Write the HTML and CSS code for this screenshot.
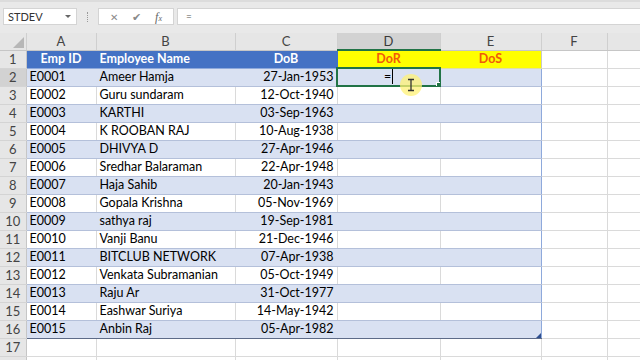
FILE: index.html
```html
<!DOCTYPE html>
<html lang="en">
<head>
    <meta charset="UTF-8">
    <title>Employee Sheet</title>
    <link rel="stylesheet" href="styles.css">
</head>
<body>
    <div class="formula-bar">
        <div class="name-box">
            <span>STDEV</span>
            <span class="arrow"></span>
        </div>
        <div class="grip"></div>
        <div class="fx-buttons">
            <span class="fx-btn cancel">&#x2715;</span>
            <span class="fx-btn enter">&#x2714;</span>
            <span class="fx-btn fx"><i>f</i><small>x</small></span>
        </div>
        <div class="fx-input">=</div>
    </div>

    <table class="sheet">
        <colgroup>
            <col class="c-rh"><col class="c-a"><col class="c-b"><col class="c-c">
            <col class="c-d"><col class="c-e"><col class="c-f"><col class="c-g">
        </colgroup>
        <thead>
            <tr>
                <th class="corner"><span class="tri"></span></th>
                <th>A</th><th>B</th><th>C</th><th class="active">D</th><th>E</th><th>F</th><th></th>
            </tr>
        </thead>
        <tbody id="rows">
            <tr class="head">
                <th class="rh">1</th>
                <td class="blue">Emp ID</td>
                <td class="blue left">Employee Name</td>
                <td class="blue">DoB</td>
                <td class="yellow">DoR</td>
                <td class="yellow last">DoS</td>
                <td></td><td></td>
            </tr>
        </tbody>
    </table>

    <div class="cursor">
        <svg width="24" height="24" viewBox="0 0 24 24">
            <circle cx="12" cy="12" r="11" fill="#fff176" fill-opacity="0.75"/>
            <path d="M9 6.5h6M9 17.5h6M12 6.5v11" stroke="#333" stroke-width="1.3" fill="none"/>
        </svg>
    </div>

    <script>
        // employee data
        const employees = [
            ['E0001', 'Ameer Hamja', '27-Jan-1953'],
            ['E0002', 'Guru sundaram', '12-Oct-1940'],
            ['E0003', 'KARTHI', '03-Sep-1963'],
            ['E0004', 'K ROOBAN RAJ', '10-Aug-1938'],
            ['E0005', 'DHIVYA D', '27-Apr-1946'],
            ['E0006', 'Sredhar Balaraman', '22-Apr-1948'],
            ['E0007', 'Haja Sahib', '20-Jan-1943'],
            ['E0008', 'Gopala Krishna', '05-Nov-1969'],
            ['E0009', 'sathya raj', '19-Sep-1981'],
            ['E0010', 'Vanji Banu', '21-Dec-1946'],
            ['E0011', 'BITCLUB NETWORK', '07-Apr-1938'],
            ['E0012', 'Venkata Subramanian', '05-Oct-1949'],
            ['E0013', 'Raju Ar', '31-Oct-1977'],
            ['E0014', 'Eashwar Suriya', '14-May-1942'],
            ['E0015', 'Anbin Raj', '05-Apr-1982']
        ];

        const body = document.getElementById('rows');
        let html = '';
        employees.forEach((emp, i) => {
            const rowNum = i + 2;
            const band = i % 2 === 0 ? 'band' : 'plain';
            const lastRow = i === employees.length - 1 ? ' bottom' : '';
            html += `<tr class="${band}${lastRow}">
                <th class="rh${rowNum === 2 ? ' active' : ''}">${rowNum}</th>
                <td class="t">${emp[0]}</td>
                <td class="t">${emp[1]}</td>
                <td class="t num">${emp[2]}</td>
                <td class="t${rowNum === 2 ? ' sel' : ''}">${rowNum === 2 ? '<span class="edit">=</span>' : ''}</td>
                <td class="t last">${i === employees.length - 1 ? '<span class="handle"></span>' : ''}</td>
                <td></td><td></td>
            </tr>`;
        });
        for (let r = 17; r <= 18; r++) {
            html += `<tr><th class="rh">${r}</th><td></td><td></td><td></td><td></td><td></td><td></td><td></td></tr>`;
        }
        body.insertAdjacentHTML('beforeend', html);
    </script>
</body>
</html>
```

FILE: styles.css
```css
/* sheet styles */
body {
    margin: 0;
    width: 640px;
    height: 360px;
    overflow: hidden;
    background: #ffffff;
    font-family: 'Lato', 'Open Sans', sans-serif;
    color: #000;
    position: relative;
}

.formula-bar {
    height: 33px;
    background: #e9e9e9;
    border-top: 2px solid #dcdcdc;
    box-sizing: border-box;
    display: flex;
    align-items: center;
    padding: 0 0 2px 3px;
}

.name-box {
    width: 74px;
    height: 17px;
    background: #fff;
    border: 1px solid #d4d4d4;
    box-sizing: border-box;
    display: flex;
    align-items: center;
    justify-content: space-between;
    padding: 0 5px 0 4px;
    font-size: 11px;
    color: #333;
}

.arrow {
    width: 0;
    height: 0;
    border-left: 3px solid transparent;
    border-right: 3px solid transparent;
    border-top: 3px solid #666;
}

.grip {
    width: 1px;
    height: 10px;
    margin: 0 9px 0 10px;
    border-left: 1px dotted #999;
}

.fx-buttons {
    width: 76px;
    height: 17px;
    background: #fff;
    border: 1px solid #d4d4d4;
    box-sizing: border-box;
    display: flex;
    align-items: center;
    justify-content: space-around;
    padding: 0 4px;
}

.fx-btn {
    font-size: 11px;
    color: #8a8a8a;
    line-height: 1;
}

.fx-btn.cancel {
    font-size: 10px;
}

.fx-btn.fx {
    font-family: 'Liberation Serif', serif;
    font-size: 12px;
    color: #666;
}

.fx-btn.fx small {
    font-size: 8px;
    font-style: italic;
}

.fx-input {
    flex: 1;
    height: 17px;
    margin-left: 3px;
    background: #fff;
    border: 1px solid #d4d4d4;
    border-right: none;
    box-sizing: border-box;
    font-size: 10px;
    line-height: 15px;
    padding-left: 8px;
    color: #555;
}

.sheet {
    width: 640px;
    table-layout: fixed;
    border-collapse: collapse;
    font-size: 12.5px;
}

.c-rh { width: 26px; }
.c-a { width: 70px; }
.c-b { width: 139px; }
.c-c { width: 102px; }
.c-d { width: 103px; }
.c-e { width: 101px; }
.c-f { width: 66px; }
.c-g { width: 33px; }

thead th {
    height: 16px;
    padding: 0;
    background: #e6e6e6;
    border-right: 1px solid #cfcfcf;
    border-bottom: 1px solid #c6c6c6;
    font-weight: normal;
    font-size: 13px;
    color: #444;
    line-height: 15px;
}

thead th.active {
    background: #d2d2d2;
    border-bottom: 2px solid #217346;
    color: #3a3a3a;
}

.corner {
    position: relative;
}

.tri {
    position: absolute;
    right: 2px;
    bottom: 2px;
    width: 0;
    height: 0;
    border-left: 11px solid transparent;
    border-bottom: 11px solid #b7b7b7;
}

tbody tr {
    height: 18px;
}

tbody th.rh {
    padding: 0;
    background: #e6e6e6;
    border-right: 1px solid #c6c6c6;
    border-bottom: 1px solid #d4d4d4;
    font-weight: normal;
    color: #444;
    font-size: 13px;
}

tbody th.rh.active {
    background: #d2d2d2;
}

td {
    padding: 0 3px;
    border-right: 1px solid #dadada;
    border-bottom: 1px solid #dadada;
    white-space: nowrap;
    overflow: hidden;
    line-height: 16px;
}

.head td.blue {
    background: #4472c4;
    color: #fff;
    font-weight: bold;
    text-align: center;
    border-right-color: #4472c4;
    border-bottom-color: #8ea9db;
}

.head td.left {
    text-align: left;
}

.head td.yellow {
    background: #ffff00;
    color: #f05a0a;
    font-weight: bold;
    text-align: center;
    border-right-color: #ffff00;
    border-bottom-color: #e0e0a0;
}

.head td.last {
    border-right: 1px solid #c8c8c8;
}

.band td.t {
    background: #d9e1f2;
    border-right-color: #d9e1f2;
    border-bottom-color: #b4c0da;
}

.plain td.t {
    border-bottom-color: #b4c0da;
}

td.t.last {
    border-right: 1px solid #8ea9db;
}

.bottom td.t {
    border-bottom: 1px solid #5d6b88;
}

td.num {
    text-align: right;
}

td.sel {
    position: relative;
    outline: 2px solid #217346;
    outline-offset: -1px;
    text-align: center;
}

td.sel::after {
    content: '';
    position: absolute;
    right: -3px;
    bottom: -3px;
    width: 5px;
    height: 5px;
    background: #217346;
    border: 1px solid #fff;
}

.edit {
    border-right: 1px solid #000;
    padding-right: 1px;
}

td.last {
    position: relative;
}

.handle {
    position: absolute;
    right: 0;
    bottom: 0;
    width: 0;
    height: 0;
    border-left: 5px solid transparent;
    border-bottom: 5px solid #2f4f8f;
}

.cursor {
    position: absolute;
    left: 399px;
    top: 73px;
    width: 24px;
    height: 24px;
}
```
